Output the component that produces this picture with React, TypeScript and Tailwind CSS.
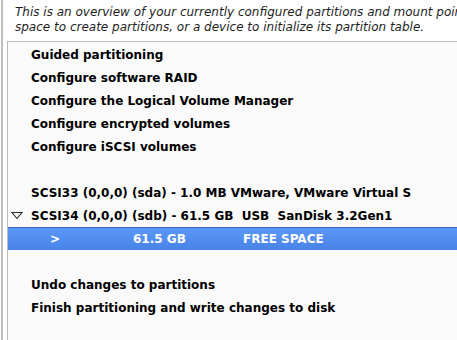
import React from "react";

const items: { label: string; kind?: "blank" | "disk" | "open" | "sel" }[] = [
  { label: "Guided partitioning" },
  { label: "Configure software RAID" },
  { label: "Configure the Logical Volume Manager" },
  { label: "Configure encrypted volumes" },
  { label: "Configure iSCSI volumes" },
  { label: "", kind: "blank" },
  { label: "SCSI33 (0,0,0) (sda) - 1.0 MB VMware, VMware Virtual S" },
  { label: "SCSI34 (0,0,0) (sdb) - 61.5 GB  USB  SanDisk 3.2Gen1", kind: "open" },
  { label: "", kind: "sel" },
  { label: "", kind: "blank" },
  { label: "Undo changes to partitions" },
  { label: "Finish partitioning and write changes to disk" },
];

export default function App() {
  return (
    <div className="w-[457px] h-[340px] overflow-hidden bg-white font-['DejaVu_Sans',sans-serif] flex">
      <div className="w-px shrink-0 bg-white" />
      <div className="w-[2px] shrink-0 bg-[#bdbdbd]" />
      <div className="flex-1 flex flex-col pl-[4px] min-w-0">
        <div className="pl-[8px] pt-[5px] text-[12px] leading-[15px] italic text-[#1e1e1e] whitespace-nowrap overflow-hidden">
          <div>This is an overview of your currently configured partitions and mount point</div>
          <div>space to create partitions, or a device to initialize its partition table.</div>
        </div>
        <div className="mt-[6px] flex-1 border-l border-t border-[#bcbcbc] bg-[#fafafa] pt-[1px]">
          {items.map((it, i) => {
            if (it.kind === "sel") {
              return (
                <div
                  key={i}
                  className="h-[23px] flex items-center border-t border-[#3367c4] bg-gradient-to-b from-[#5b98f6] to-[#4883e8] text-white font-bold text-[12px] whitespace-pre"
                >
                  <span className="w-[42px] shrink-0" />
                  <span className="w-[83px] shrink-0">&gt;</span>
                  <span className="w-[110px] shrink-0">61.5 GB</span>
                  <span>FREE SPACE</span>
                </div>
              );
            }
            return (
              <div key={i} className="h-[23px] flex items-center text-[12px] font-bold text-black whitespace-pre relative">
                {it.kind === "open" && (
                  <svg className="absolute left-[3px] top-[7px]" width="12" height="9" viewBox="0 0 12 9">
                    <path d="M1 1.5 L11 1.5 L6 7.5 Z" fill="none" stroke="#2a2a2a" strokeWidth="1.1" strokeLinejoin="miter" />
                  </svg>
                )}
                <span className="pl-[23px]">{it.label}</span>
              </div>
            );
          })}
        </div>
      </div>
    </div>
  );
}
